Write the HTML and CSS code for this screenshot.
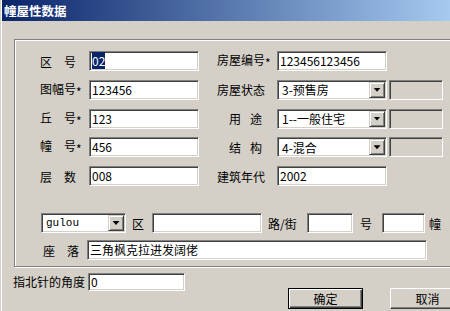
FILE: index.html
```html
<!DOCTYPE html>
<html>
<head>
  <meta charset="UTF-8">
  <title>幢屋性数据</title>
  <link rel="stylesheet" href="styles.css">
</head>
<body>
  <div class="window">
    <div class="title">幢屋性数据</div>
    <div class="content">
      <div class="group">
        <div class="grid">
          <span>区　号</span>
          <div class="field"><span class="sel">02</span></div>
          <span class="rl">房屋编号<i>*</i></span>
          <div class="field">123456123456</div>
          <span></span>

          <span>图幅号<i>*</i></span>
          <div class="field">123456</div>
          <span class="rl">房屋状态</span>
          <div class="combo"><span class="val">3-预售房</span><b class="arrow"></b></div>
          <div class="field off"></div>

          <span>丘　号<i>*</i></span>
          <div class="field">123</div>
          <span class="rl sp">用途</span>
          <div class="combo"><span class="val">1--一般住宅</span><b class="arrow"></b></div>
          <div class="field off"></div>

          <span>幢　号<i>*</i></span>
          <div class="field">456</div>
          <span class="rl sp">结构</span>
          <div class="combo"><span class="val">4-混合</span><b class="arrow"></b></div>
          <div class="field off"></div>

          <span>层　数</span>
          <div class="field">008</div>
          <span class="rl">建筑年代</span>
          <div class="field">2002</div>
          <span></span>
        </div>

        <div class="addr">
          <div class="combo c-dist"><span class="val mono">gulou</span><b class="arrow"></b></div>
          <span class="t-dist">区</span>
          <div class="field f-dist"></div>
          <span class="t-road">路/街</span>
          <div class="field f-road"></div>
          <span class="t-no">号</span>
          <div class="field f-no"></div>
          <span class="t-bld">幢</span>
        </div>

        <div class="loc">
          <span>座　落</span>
          <div class="field f-loc">三角枫克拉进发阔佬</div>
        </div>
      </div>

      <div class="footer">
        <span class="angle-label">指北针的角度</span>
        <div class="field f-angle">0</div>
        <button class="btn default">确定</button>
        <button class="btn cancel">取消</button>
      </div>
    </div>
  </div>
</body>
</html>
```

FILE: styles.css
```css
body {margin:0;background:#d4d0c8;font:12px "Noto Sans CJK SC",sans-serif;color:#000;overflow:hidden;}
.window {width:449px;height:311px;margin-left:1px;border-left:1px solid #fff;overflow:hidden;}
.title {height:21px;line-height:21px;padding-left:2px;color:#fff;font-weight:bold;font-size:12.5px;
  background:linear-gradient(to right,#0a246a,#a6caf0);}
.content {width:478px;padding-left:12px;}
i {font-style:normal;vertical-align:-3px;}

.group {margin-top:18px;border:1px solid #808080;box-shadow:inset 1px 1px #fff,1px 1px #fff;
  padding:11px 0 6px 25px;}
.grid {display:grid;grid-template-columns:49px 110px 78px 110px 56px;grid-auto-rows:20px;
  row-gap:8.75px;align-items:center;}
.rl {padding-left:18px;}
.rl.sp {padding-left:30px;letter-spacing:9px;}

.field {box-sizing:border-box;height:20px;line-height:16px;padding:1px 2px;background:#fff;white-space:nowrap;overflow:hidden;
  border:1px solid;border-color:#808080 #fff #fff #808080;box-shadow:inset 1px 1px #404040,inset -1px -1px #d4d0c8;}
.field.off {background:#d4d0c8;margin-left:2px;width:54px;}
.sel {background:#0a246a;color:#fff;}

.combo {box-sizing:border-box;height:20px;display:flex;align-items:center;background:#fff;padding:1px;
  border:1px solid;border-color:#808080 #fff #fff #808080;box-shadow:inset 1px 1px #404040,inset -1px -1px #d4d0c8;}
.combo .val {flex:1;padding-left:3px;white-space:nowrap;}
.arrow {box-sizing:border-box;width:16px;height:16px;display:flex;align-items:center;justify-content:center;background:#d4d0c8;
  border:1px solid;border-color:#d4d0c8 #404040 #404040 #d4d0c8;box-shadow:inset 1px 1px #fff,inset -1px -1px #808080;}
.arrow::after {content:"";width:7px;height:4px;background:#000;clip-path:polygon(0 0,100% 0,50% 100%);}
.mono {font:11px "Liberation Mono",monospace;}

.addr {display:flex;align-items:center;margin:27px 0 0 1px;}
.c-dist {width:85px;}
.t-dist {margin:0 8px 0 6px;}
.f-dist {width:110px;}
.t-road {width:30px;margin:0 9px 0 6px;}
.f-road {width:46px;}
.t-no {margin:0 10px 0 7px;}
.f-no {width:43px;}
.t-bld {margin-left:4px;}

.loc {display:flex;align-items:center;margin:7px 0 0 3px;}
.f-loc {width:340px;margin-left:8px;}

.footer {display:flex;align-items:flex-start;margin:6px 0 0 -1px;}
.angle-label {width:72px;line-height:18px;margin-right:3px;}
.f-angle {width:97px;height:18px;line-height:14px;}
.btn {box-sizing:border-box;flex:none;width:75px;height:21px;margin-top:15px;padding:0;background:#d4d0c8;font:12px "Noto Sans CJK SC",sans-serif;color:#000;
  border:1px solid;border-color:#fff #404040 #404040 #fff;box-shadow:inset -1px -1px #808080;}
.btn.default {margin-left:103px;border-color:#000;box-shadow:inset 1px 1px #fff,inset -1px -1px #404040,inset -2px -2px #808080;}
.btn.cancel {margin-left:27px;}
```
